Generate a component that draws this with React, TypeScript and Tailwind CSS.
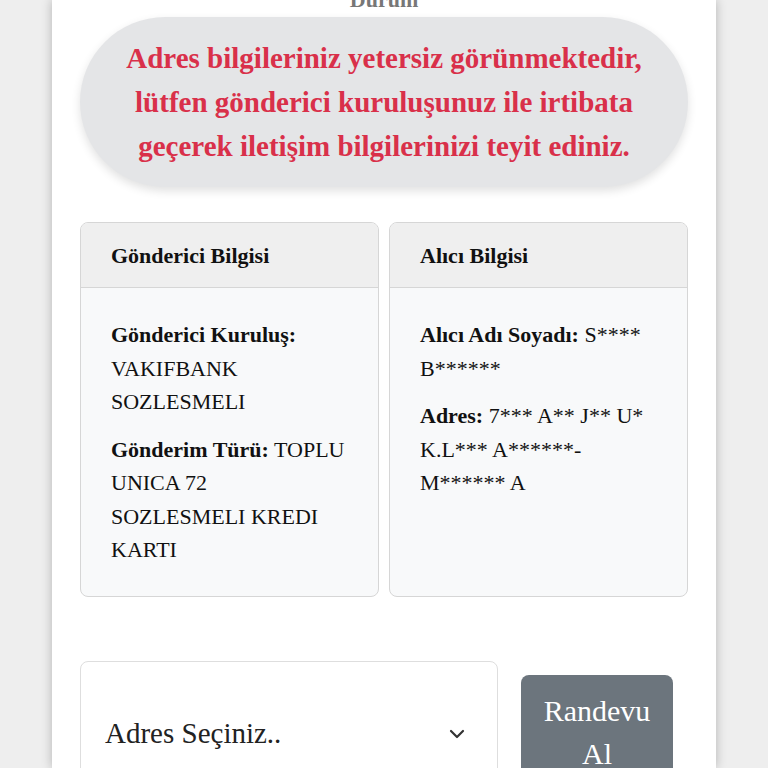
import { ChevronDown } from "lucide-react";

const serif = { fontFamily: '"Liberation Serif", "Times New Roman", serif' };

function InfoCard({ title, children }: { title: string; children: React.ReactNode }) {
  return (
    <div className="flex flex-col overflow-hidden rounded-lg border border-[#d6d6d6] bg-[#f8f9fa]">
      <div className="flex h-[65px] shrink-0 items-center border-b border-[#d6d6d6] bg-[#efefef] px-[30px] text-[22px] font-bold text-[#111]">
        {title}
      </div>
      <div className="flex flex-1 flex-col gap-[14px] pt-[30px] pr-[28px] pb-8 pl-[30px] text-[22px] leading-[33.5px] text-[#111]">
        {children}
      </div>
    </div>
  );
}

export default function App() {
  return (
    <div className="flex h-[768px] justify-center overflow-hidden bg-[#eeeeee]" style={serif}>
      <div className="flex w-[664px] flex-col bg-white px-[28px] shadow-[0_0_10px_rgba(0,0,0,0.25)]">
        <div className="-mt-[16px] shrink-0 text-center text-[22px] font-bold leading-[32px] text-[#777]">Durum</div>
        <div className="mt-[1px] flex h-[170px] shrink-0 items-center justify-center rounded-[85px] bg-[#e4e5e7] px-4 text-center text-[29px] font-bold leading-[44px] text-[#d9304a] shadow-[0_4px_10px_rgba(0,0,0,0.12)]">
          <p>
            Adres bilgileriniz yetersiz görünmektedir,
            <br />
            lütfen gönderici kuruluşunuz ile irtibata
            <br />
            geçerek iletişim bilgilerinizi teyit ediniz.
          </p>
        </div>

        <div className="mt-[35px] grid h-[375px] shrink-0 grid-cols-2 gap-[10px]">
          <InfoCard title="Gönderici Bilgisi">
            <p>
              <b>Gönderici Kuruluş:</b> VAKIFBANK SOZLESMELI
            </p>
            <p>
              <b>Gönderim Türü:</b> TOPLU UNICA 72
              <br />
              SOZLESMELI KREDI KARTI
            </p>
          </InfoCard>
          <InfoCard title="Alıcı Bilgisi">
            <p>
              <b>Alıcı Adı Soyadı:</b> S**** B******
            </p>
            <p>
              <b>Adres:</b> 7*** A** J** U* K.L*** A******-M****** A
            </p>
          </InfoCard>
        </div>

        <div className="mt-[64px] flex shrink-0 items-start gap-[23px]">
          <div className="flex h-[145px] w-[418px] items-center justify-between rounded-lg border border-[#dedede] bg-white pl-6 pr-7 text-[29px] text-[#222]">
            <span>Adres Seçiniz..</span>
            <ChevronDown className="h-6 w-6 text-[#333]" strokeWidth={2.2} />
          </div>
          <button className="mt-[14px] w-[152px] rounded-lg bg-[#6c757d] px-3 py-[14px] text-[30px] leading-[43px] text-white">
            Randevu Al
          </button>
        </div>
      </div>
    </div>
  );
}
